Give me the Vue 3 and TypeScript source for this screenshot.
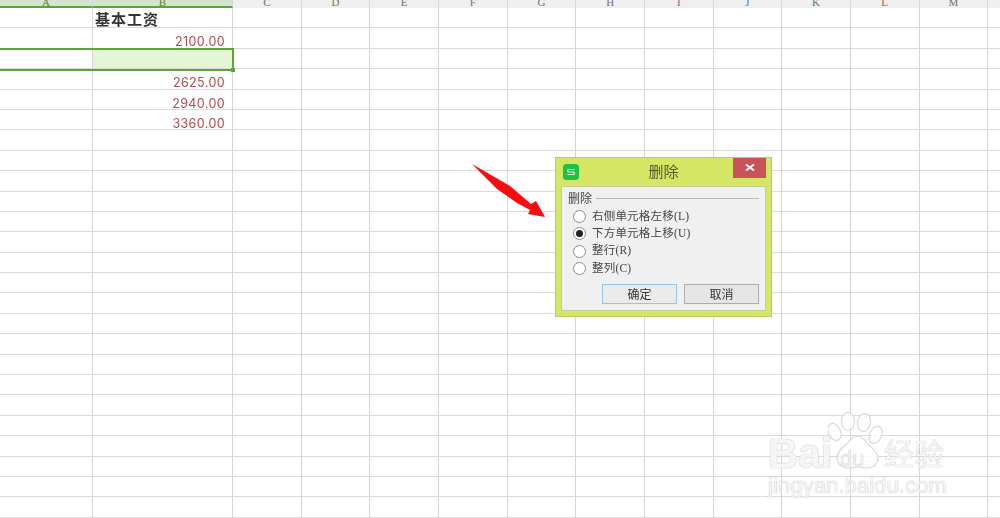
<script setup lang="ts">
const letters: string[] = 'ABCDEFGHIJKLMN'.split('')
const rowCount = 25
const cellsByRow: Record<number, string> = {
  1: '2100.00',
  3: '2625.00',
  4: '2940.00',
  5: '3360.00',
}
const rows = Array.from({ length: rowCount }, (_, i) => i)
const options: { label: string; checked: boolean }[] = [
  { label: '右侧单元格左移(L)', checked: false },
  { label: '下方单元格上移(U)', checked: true },
  { label: '整行(R)', checked: false },
  { label: '整列(C)', checked: false },
]
</script>

<template>
  <div class="page">
    <div class="sheet">
      <div
        v-for="(l, i) in letters"
        :key="l"
        class="head"
        :class="{ active: i < 2 }"
      >
        <span>{{ l }}</span>
      </div>
      <template v-for="r in rows" :key="r">
        <div
          v-for="(l, i) in letters"
          :key="l"
          class="cell"
          :class="{ picked: r === 2 && i === 1, title: r === 0 && i === 1, num: i === 1 && !!cellsByRow[r] }"
        >
          <template v-if="i === 1 && r === 0">基本工资</template>
          <template v-else-if="i === 1 && cellsByRow[r]">{{ cellsByRow[r] }}</template>
        </div>
      </template>
    </div>

    <div class="selection"><i class="handle"></i></div>

    <svg class="arrow" width="90" height="65" viewBox="0 0 90 65">
      <polygon points="2,4 40,26 61,44 66,41 75,57 58,54 60,50 47,43 27,29" fill="#fb0a12" />
    </svg>

    <div class="watermark">
      <svg class="wm-paw" width="56" height="60" viewBox="0 0 56 60">
        <g fill="#ffffffcc" stroke="#d8d8d8" stroke-width="1.2">
          <ellipse cx="6.5" cy="20" rx="6" ry="9" transform="rotate(-25 6.5 20)" />
          <ellipse cx="20" cy="9.5" rx="6.5" ry="9" />
          <ellipse cx="36" cy="10.5" rx="6.5" ry="9" transform="rotate(8 36 10.5)" />
          <ellipse cx="47.5" cy="23" rx="6" ry="9" transform="rotate(25 47.5 23)" />
          <path d="M30 24c4 0 7 4 10 8 4 4 10 8 10 14 0 6-5 10-11 10-4 0-6-1-9-1s-6 1-10 1c-6 0-11-4-11-10 0-6 5-10 10-14 3-4 6-8 11-8z" />
        </g>
      </svg>
      <div class="wm-top">
        <span class="wm-bai">Bai</span>
        <span class="wm-du">du</span>
        <span class="wm-cn">经验</span>
      </div>
      <div class="wm-url">jingyan.baidu.com</div>
    </div>

    <div class="dialog">
      <div class="titlebar">
        <svg class="logo" width="16" height="16" viewBox="0 0 16 16">
          <rect width="16" height="16" rx="3.5" fill="#1fc145" />
          <path d="M11.5 5.5H5.5Q4.6 5.5 4.6 6.6V6.9Q4.6 8 5.5 8H10.5Q11.4 8 11.4 9.1V9.4Q11.4 10.5 10.5 10.5H4.5" fill="none" stroke="#e6f8e8" stroke-width="1.2" />
        </svg>
        <span class="dlg-title">删除</span>
        <span class="close">
          <svg width="10" height="10" viewBox="0 0 10 10">
            <path d="M1 1.5l8 6M9 1.5l-8 6" stroke="#fff" stroke-width="1.8" />
          </svg>
        </span>
      </div>
      <div class="panel">
        <div class="legend"><span>删除</span><i></i></div>
        <div class="options">
          <label v-for="o in options" :key="o.label" class="opt">
            <span class="radio" :class="{ on: o.checked }"></span>
            <span class="opt-text">{{ o.label }}</span>
          </label>
        </div>
        <div class="buttons">
          <button class="btn primary">确定</button>
          <button class="btn">取消</button>
        </div>
      </div>
    </div>
  </div>
</template>

<style scoped>
.page {
  position: relative;
  width: 1000px;
  height: 518px;
  overflow: hidden;
  background: #fff;
  font-family: "Noto Sans CJK SC", "Liberation Sans", sans-serif;
}
.sheet {
  display: grid;
  grid-template-columns: 93px 140px repeat(12, 68.67px);
  grid-template-rows: 8px repeat(25, 20.4px);
  filter: blur(0.4px);
}
.head {
  background: #efefef;
  border-right: 1.5px solid #d8d8d8;
  overflow: hidden;
  text-align: center;
  font: 11px/1 "Liberation Serif", serif;
  color: #6f6f6f;
}
.head span {
  display: block;
  margin-top: -3px;
}
.head.active {
  background: #d5e4cc;
  border-bottom: 2px solid #5da436;
  color: #4d8a30;
}
.cell {
  border-right: 1.5px solid #d6d6d6;
  border-bottom: 1.5px solid #dadada;
  box-sizing: border-box;
  min-width: 0;
}
.title {
  font-weight: 700;
  font-size: 15px;
  letter-spacing: 1px;
  line-height: 22px;
  padding-left: 2px;
  color: #333;
}
.num {
  font: 12.5px/27px "Inter", sans-serif;
  letter-spacing: 0.4px;
  text-align: right;
  padding-right: 7px;
  color: #ad4d50;
  overflow: hidden;
}
.picked {
  background: #e4f5d4;
}
.selection {
  position: absolute;
  left: -3px;
  top: 48px;
  width: 233px;
  height: 18.5px;
  border: 2px solid #5da436;
  filter: blur(0.3px);
}
.handle {
  position: absolute;
  right: -3px;
  bottom: -3px;
  width: 4px;
  height: 4px;
  background: #5da436;
}
.arrow {
  position: absolute;
  left: 470px;
  top: 160px;
}
.watermark {
  position: absolute;
  left: 768px;
  top: 412px;
  width: 190px;
  height: 86px;
  filter: blur(0.4px);
}
.wm-paw {
  position: absolute;
  left: 60px;
  top: 0;
}
.wm-top {
  position: relative;
  display: flex;
  align-items: flex-start;
  height: 60px;
}
.wm-bai,
.wm-du,
.wm-cn,
.wm-url {
  color: #ffffffd9;
  text-shadow: 0 0 1px #bdbdbd, 0 0 1px #bdbdbd;
}
.wm-bai {
  font: 700 42px/48px "Liberation Sans", sans-serif;
  letter-spacing: -0.5px;
  margin-top: 18px;
  width: 72px;
}
.wm-du {
  font: 22px/22px "Liberation Sans", sans-serif;
  margin-top: 36px;
  width: 44px;
  color: #f0f0f0;
}
.wm-cn {
  font-size: 30px;
  line-height: 44px;
  margin-top: 18px;
}
.wm-url {
  font: 22.2px/26px "Liberation Sans", sans-serif;
  position: relative;
  margin-top: 1px;
  white-space: nowrap;
}
.dialog {
  position: absolute;
  left: 555px;
  top: 157px;
  width: 217px;
  height: 160px;
  box-sizing: border-box;
  background: #d5e664;
  border: 1px solid #bcc862;
  padding: 0 5px 5px;
  display: flex;
  flex-direction: column;
  filter: blur(0.35px);
}
.titlebar {
  position: relative;
  height: 28px;
  flex: none;
  display: flex;
  align-items: center;
  justify-content: center;
}
.logo {
  position: absolute;
  left: 2px;
  top: 6px;
}
.dlg-title {
  font-size: 15px;
  color: #56592c;
  margin-top: -3px;
}
.close {
  position: absolute;
  right: 0;
  top: 0;
  width: 33px;
  height: 20px;
  background: #c9535a;
  display: flex;
  align-items: center;
  justify-content: center;
}
.panel {
  flex: 1;
  background: #f0f0f0;
  border: 1px solid #c5cd9a;
  padding: 3px 6px 6px 6px;
  display: flex;
  flex-direction: column;
  min-height: 0;
}
.legend {
  display: flex;
  align-items: center;
  gap: 4px;
  font-size: 12px;
  line-height: 16px;
  color: #444;
}
.legend i {
  flex: 1;
  height: 1px;
  background: #b8b8b8;
}
.options {
  display: flex;
  flex-direction: column;
  margin-top: 2px;
  padding-left: 5px;
}
.opt {
  display: flex;
  align-items: center;
  gap: 6px;
  height: 17.3px;
  font-size: 11.5px;
  color: #444;
  white-space: nowrap;
}
.opt-text {
  font-family: "Liberation Serif", "Noto Sans CJK SC", serif;
  letter-spacing: 0.2px;
  line-height: 15px;
  margin-top: -1px;
}
.radio {
  width: 13px;
  height: 13px;
  box-sizing: border-box;
  border: 1px solid #8e8e8e;
  border-radius: 50%;
  background: #fff;
  flex: none;
  display: flex;
  align-items: center;
  justify-content: center;
}
.radio.on::after {
  content: "";
  width: 7px;
  height: 7px;
  border-radius: 50%;
  background: #222;
}
.buttons {
  display: flex;
  justify-content: flex-end;
  gap: 7px;
  margin-top: auto;
}
.btn {
  width: 75px;
  height: 20px;
  box-sizing: border-box;
  padding: 0;
  border: 1px solid #adadad;
  background: #e6e6e6;
  font: 12px/18px "Noto Sans CJK SC", sans-serif;
  color: #333;
}
.btn.primary {
  border-color: #93c6ef;
  background: #ebebeb;
}
</style>

<style>
html, body { margin: 0; background: #fff; }
</style>
